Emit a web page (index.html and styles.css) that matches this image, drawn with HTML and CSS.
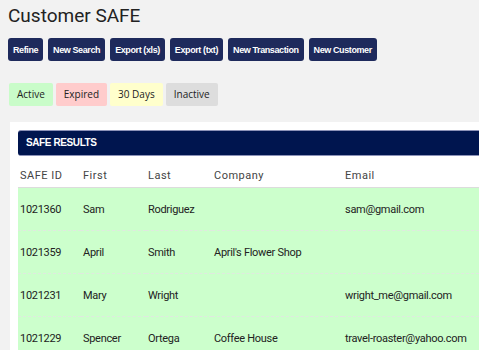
FILE: index.html
```html
<!DOCTYPE html>
<html>
<head>
  <title>Customer SAFE</title>
  <link rel="stylesheet" href="styles.css">
</head>
<body>
  <h1>Customer SAFE</h1>

  <div class="actions">
    <button>Refine</button>
    <button>New Search</button>
    <button>Export (xls)</button>
    <button>Export (txt)</button>
    <button>New Transaction</button>
    <button>New Customer</button>
  </div>

  <div class="legend">
    <span class="key key-active">Active</span>
    <span class="key key-expired">Expired</span>
    <span class="key key-soon">30 Days</span>
    <span class="key key-inactive">Inactive</span>
  </div>

  <div class="panel">
    <div class="panel-title">SAFE RESULTS</div>
    <table class="results">
      <thead>
        <tr>
          <th class="col-id">SAFE ID</th>
          <th class="col-first">First</th>
          <th class="col-last">Last</th>
          <th class="col-company">Company</th>
          <th>Email</th>
        </tr>
      </thead>
      <tbody>
        <tr class="active">
          <td>1021360</td>
          <td>Sam</td>
          <td>Rodriguez</td>
          <td></td>
          <td>sam@gmail.com</td>
        </tr>
        <tr class="active">
          <td>1021359</td>
          <td>April</td>
          <td>Smith</td>
          <td>April's Flower Shop</td>
          <td></td>
        </tr>
        <tr class="active">
          <td>1021231</td>
          <td>Mary</td>
          <td>Wright</td>
          <td></td>
          <td>wright_me@gmail.com</td>
        </tr>
        <tr class="active">
          <td>1021229</td>
          <td>Spencer</td>
          <td>Ortega</td>
          <td>Coffee House</td>
          <td>travel-roaster@yahoo.com</td>
        </tr>
      </tbody>
    </table>
  </div>
</body>
</html>
```

FILE: styles.css
```css
html {
  overflow: hidden;
}
body {
  margin: 0;
  background-color: #f2f2f2;
  font-family: Roboto, Arial, sans-serif;
  color: #222;
}
h1 {
  font-size: 19px;
  font-weight: normal;
  line-height: 24px;
  margin: 4px 0 0 8px;
  color: #222;
}
.actions {
  display: flex;
  gap: 5px;
  margin: 10px 0 0 8px;
}
button {
  height: 23px;
  padding: 0 5px;
  border: none;
  border-radius: 3px;
  background-color: #1e2a5c;
  color: white;
  font-family: "Liberation Sans", Arial, sans-serif;
  font-size: 9px;
  font-weight: bold;
  letter-spacing: -0.4px;
  cursor: pointer;
}
.legend {
  display: flex;
  gap: 3px;
  margin: 22px 0 0 9px;
}
.key {
  height: 23px;
  line-height: 23px;
  padding: 0 8px;
  border-radius: 2px;
  font-family: "Open Sans", Arial, sans-serif;
  font-size: 10px;
  color: #222;
}
.key-active {
  background-color: #c9fcc9;
}
.key-expired {
  background-color: #ffcccc;
}
.key-soon {
  background-color: #ffffcc;
}
.key-inactive {
  background-color: #dddddd;
}
.panel {
  margin: 16px 0 0 10px;
  padding: 8px 0 0 8px;
  background-color: white;
}
.panel-title {
  height: 24px;
  line-height: 24px;
  padding-left: 8px;
  background-color: #00154f;
  border-top: 1px solid #8c92b8;
  border-bottom: 1px solid #8c92b8;
  border-radius: 3px 0 0 3px;
  color: white;
  font-family: "Liberation Sans", Arial, sans-serif;
  font-size: 10px;
  font-weight: bold;
  letter-spacing: -0.4px;
}
.results {
  width: 100%;
  border-collapse: collapse;
  font-size: 11px;
}
.results th {
  height: 26px;
  padding: 0 0 5px 2px;
  vertical-align: bottom;
  text-align: left;
  font-weight: normal;
  color: #444;
  letter-spacing: 0.5px;
  border-bottom: 1px solid #dcdcdc;
}
.col-id {
  width: 61px;
}
.col-first {
  width: 63px;
}
.col-last {
  width: 64px;
}
.col-company {
  width: 129px;
}
.results td {
  height: 41px;
  padding: 1px 0 0 2px;
  color: #222;
  letter-spacing: -0.3px;
  border-bottom: 1px dashed #dfe9df;
}
.results tr.active td {
  background-color: #ccffcc;
}
```
